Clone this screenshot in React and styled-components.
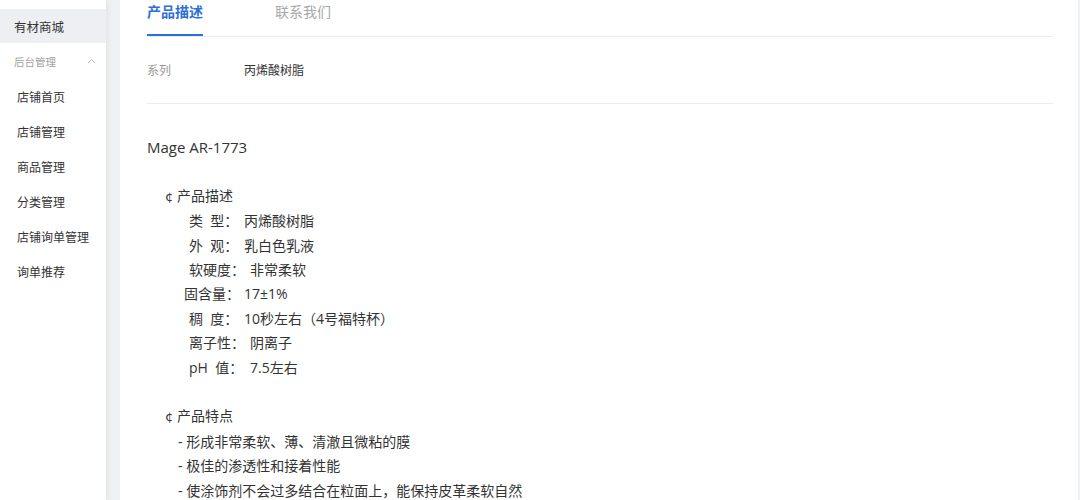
import React from "react";
import styled, { createGlobalStyle } from "styled-components";

const GlobalStyle = createGlobalStyle`
  html, body {
    margin: 0;
    padding: 0;
    height: 500px;
    overflow: hidden;
    background: #f0f1f3;
    font-family: "Open Sans", "Noto Sans CJK SC", sans-serif;
  }
`;

const Page = styled.div`
  display: flex;
  height: 500px;
  width: 1080px;
`;

const Sidebar = styled.aside`
  flex: 0 0 106px;
  background: #fff;
  padding-top: 9px;
  box-shadow: 2px 0 6px rgba(0, 0, 0, 0.06);
  z-index: 1;
`;

const Brand = styled.div`
  height: 34px;
  display: flex;
  align-items: center;
  padding-left: 14px;
  background: #eeeff2;
  font-size: 12.5px;
  color: #333;
`;

const GroupTitle = styled.div`
  display: flex;
  align-items: center;
  justify-content: space-between;
  height: 36px;
  padding: 0 10px 0 14px;
  font-size: 10.5px;
  color: #a0a0a0;
`;

const MenuItem = styled.div`
  height: 35px;
  display: flex;
  align-items: center;
  padding-left: 17px;
  font-size: 12px;
  color: #333;
`;

const Main = styled.main`
  flex: 1;
  padding: 0 2px 0 14px;
  display: flex;
`;

const Card = styled.section`
  flex: 1;
  background: #fff;
  padding: 0 25px 0 27px;
`;

const Tabs = styled.div`
  display: flex;
  gap: 72px;
  border-bottom: 1px solid #ececec;
  height: 36px;
`;

const Tab = styled.div`
  font-size: 14px;
  font-weight: ${(p) => (p.$active ? 700 : 400)};
  color: ${(p) => (p.$active ? "#2e6fd7" : "#a8a8a8")};
  padding-top: 2px;
  height: 36px;
  box-sizing: border-box;
  border-bottom: 2px solid ${(p) => (p.$active ? "#2e6fd7" : "transparent")};
  line-height: 20px;
`;

const SpecRow = styled.div`
  display: flex;
  align-items: center;
  height: 66px;
  border-bottom: 1px solid #ececec;
  font-size: 12px;
`;

const SpecLabel = styled.span`
  width: 97px;
  color: #999;
`;

const SpecValue = styled.span`
  color: #333;
`;

const Body = styled.div`
  padding-top: 31px;
  font-size: 14px;
  color: #333;
  line-height: 24.4px;
`;

const Title = styled.div`
  font-size: 15px;
  margin-bottom: 24.4px;
`;

const Heading = styled.div`
  padding-left: 18px;
`;

const Cent = styled.span`
  font-family: "DejaVu Sans", sans-serif;
  font-size: 13px;
`;

const Prop = styled.div`
  display: flex;
  padding-left: ${(p) => p.$indent}px;
`;

const PropLabel = styled.span`
  white-space: pre;
  width: ${(p) => p.$w}px;
`;

const Bullet = styled.div`
  padding-left: 31px;
`;

const Gap = styled.div`
  height: 24.4px;
`;

const Chevron = () => (
  <svg width="9" height="6" viewBox="0 0 9 6">
    <path d="M1 5 L4.5 1.5 L8 5" fill="none" stroke="#b5b5b5" strokeWidth="1" />
  </svg>
);

const menu = ["店铺首页", "店铺管理", "商品管理", "分类管理", "店铺询单管理", "询单推荐"];

const props = [
  { label: "类  型：", value: "丙烯酸树脂", indent: 42, w: 55 },
  { label: "外  观：", value: "乳白色乳液", indent: 42, w: 55 },
  { label: "软硬度：", value: "非常柔软", indent: 42, w: 61 },
  { label: "固含量：", value: "17±1%", indent: 37, w: 60 },
  { label: "稠  度：", value: "10秒左右（4号福特杯）", indent: 42, w: 55 },
  { label: "离子性：", value: "阴离子", indent: 42, w: 61 },
  { label: "pH  值：", value: "7.5左右", indent: 42, w: 61 },
];

const features = [
  "形成非常柔软、薄、清澈且微粘的膜",
  "极佳的渗透性和接着性能",
  "使涂饰剂不会过多结合在粒面上，能保持皮革柔软自然",
];

export default function App() {
  return (
    <>
      <GlobalStyle />
      <Page>
        <Sidebar>
          <Brand>有材商城</Brand>
          <GroupTitle>
            后台管理
            <Chevron />
          </GroupTitle>
          {menu.map((m) => (
            <MenuItem key={m}>{m}</MenuItem>
          ))}
        </Sidebar>
        <Main>
          <Card>
            <Tabs>
              <Tab $active>产品描述</Tab>
              <Tab>联系我们</Tab>
            </Tabs>
            <SpecRow>
              <SpecLabel>系列</SpecLabel>
              <SpecValue>丙烯酸树脂</SpecValue>
            </SpecRow>
            <Body>
              <Title>Mage AR-1773</Title>
              <Heading>
                <Cent>¢</Cent> 产品描述
              </Heading>
              {props.map((p) => (
                <Prop key={p.label} $indent={p.indent}>
                  <PropLabel $w={p.w}>{p.label}</PropLabel>
                  <span>{p.value}</span>
                </Prop>
              ))}
              <Gap />
              <Heading>
                <Cent>¢</Cent> 产品特点
              </Heading>
              {features.map((f) => (
                <Bullet key={f}>- {f}</Bullet>
              ))}
            </Body>
          </Card>
        </Main>
      </Page>
    </>
  );
}
